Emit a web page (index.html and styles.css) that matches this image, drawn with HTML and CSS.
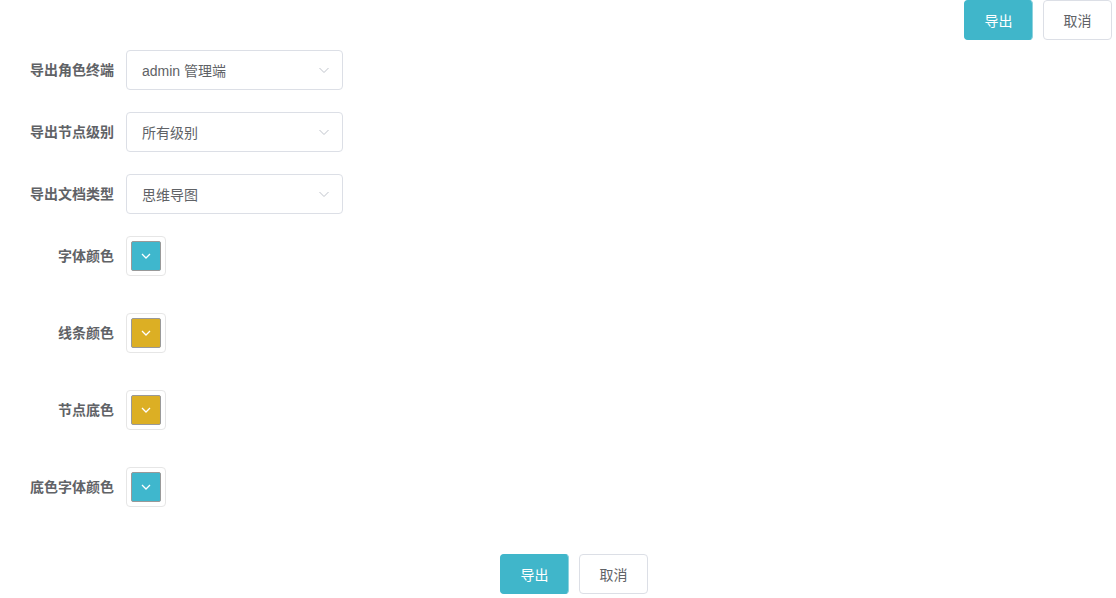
FILE: index.html
```html
<html>

<head>
    <title>
        导出
    </title>
    <link rel="stylesheet" href="styles.css">
</head>

<body>
    <div class="top-bar">
        <button class="btn btn-primary">导出</button>
        <button class="btn">取消</button>
    </div>
    <div class="form">
        <div class="form-item">
            <label class="form-label">导出角色终端</label>
            <div class="select">
                <span class="select-text">admin 管理端</span>
                <svg class="select-arrow" width="12" height="12" viewBox="0 0 12 12"><path d="M1.5 4 L6 8.5 L10.5 4" fill="none" stroke="#c0c4cc" stroke-width="1"/></svg>
            </div>
        </div>
        <div class="form-item">
            <label class="form-label">导出节点级别</label>
            <div class="select">
                <span class="select-text">所有级别</span>
                <svg class="select-arrow" width="12" height="12" viewBox="0 0 12 12"><path d="M1.5 4 L6 8.5 L10.5 4" fill="none" stroke="#c0c4cc" stroke-width="1"/></svg>
            </div>
        </div>
        <div class="form-item">
            <label class="form-label">导出文档类型</label>
            <div class="select">
                <span class="select-text">思维导图</span>
                <svg class="select-arrow" width="12" height="12" viewBox="0 0 12 12"><path d="M1.5 4 L6 8.5 L10.5 4" fill="none" stroke="#c0c4cc" stroke-width="1"/></svg>
            </div>
        </div>
        <div class="form-item color-item">
            <label class="form-label">字体颜色</label>
            <div class="picker">
                <div class="picker-color blue">
                    <svg width="12" height="12" viewBox="0 0 12 12"><path d="M2 4 L6 8 L10 4" fill="none" stroke="#fff" stroke-width="1.3"/></svg>
                </div>
            </div>
        </div>
        <div class="form-item color-item">
            <label class="form-label">线条颜色</label>
            <div class="picker">
                <div class="picker-color gold">
                    <svg width="12" height="12" viewBox="0 0 12 12"><path d="M2 4 L6 8 L10 4" fill="none" stroke="#fff" stroke-width="1.3"/></svg>
                </div>
            </div>
        </div>
        <div class="form-item color-item">
            <label class="form-label">节点底色</label>
            <div class="picker">
                <div class="picker-color gold">
                    <svg width="12" height="12" viewBox="0 0 12 12"><path d="M2 4 L6 8 L10 4" fill="none" stroke="#fff" stroke-width="1.3"/></svg>
                </div>
            </div>
        </div>
        <div class="form-item color-item">
            <label class="form-label">底色字体颜色</label>
            <div class="picker">
                <div class="picker-color blue">
                    <svg width="12" height="12" viewBox="0 0 12 12"><path d="M2 4 L6 8 L10 4" fill="none" stroke="#fff" stroke-width="1.3"/></svg>
                </div>
            </div>
        </div>
    </div>
    <div class="footer">
        <button class="btn btn-primary">导出</button>
        <button class="btn">取消</button>
    </div>
</body>

</html>
```

FILE: styles.css
```css
body {
    margin: 0;
    font-family: "Liberation Sans", "Noto Sans CJK SC", sans-serif;
    font-size: 14px;
    color: #606266;
    background: #fff;
}

.top-bar {
    display: flex;
    justify-content: flex-end;
    padding-right: 4px;
    height: 40px;
}

.btn {
    height: 40px;
    width: 69px;
    padding: 0;
    font-family: "Liberation Sans", "Noto Sans CJK SC", sans-serif;
    font-size: 14px;
    color: #606266;
    background: #fff;
    border: 1px solid #dcdfe6;
    border-radius: 4px;
    cursor: pointer;
}

.btn + .btn {
    margin-left: 10px;
}

.btn-primary {
    color: #fff;
    background: #40b6ca;
    border-color: #40b6ca;
    border-right-color: #8fd3de;
}

.form {
    padding-top: 10px;
}

.form-item {
    display: flex;
    align-items: center;
    margin-bottom: 22px;
}

.color-item {
    margin-bottom: 37px;
}

.form-label {
    width: 114px;
    padding-right: 12px;
    text-align: right;
    font-weight: bold;
    line-height: 40px;
    color: #606266;
}

.select {
    display: flex;
    align-items: center;
    justify-content: space-between;
    box-sizing: border-box;
    width: 217px;
    height: 40px;
    padding: 0 12px 0 15px;
    border: 1px solid #dcdfe6;
    border-radius: 4px;
}

.select-text {
    color: #606266;
}

.picker {
    box-sizing: border-box;
    width: 40px;
    height: 40px;
    padding: 4px;
    border: 1px solid #e6e6e6;
    border-radius: 4px;
}

.picker-color {
    display: flex;
    align-items: center;
    justify-content: center;
    box-sizing: border-box;
    width: 30px;
    height: 30px;
    border: 1px solid #999;
    border-radius: 2px;
}

.blue {
    background: #3fb7cd;
}

.gold {
    background: #dcaf24;
}

.footer {
    display: flex;
    justify-content: center;
    padding-left: 32px;
    margin-top: 47px;
}
```
